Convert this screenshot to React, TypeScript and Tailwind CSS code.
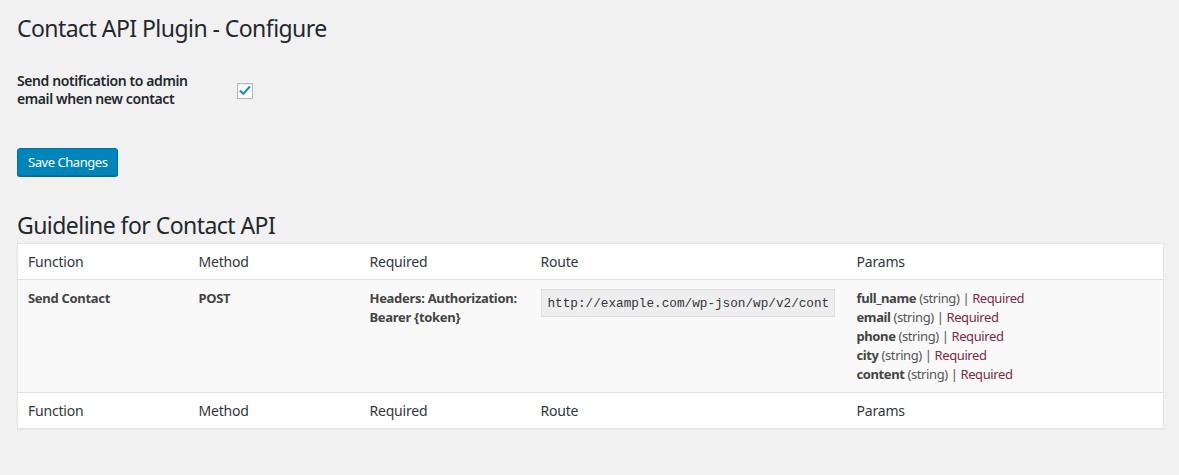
import React from 'react';

const font = { fontFamily: '"Noto Sans", "Open Sans", sans-serif' };

const params = ['full_name', 'email', 'phone', 'city', 'content'];

function HeadRow({ top }: { top?: boolean }) {
  const cls = `text-left font-normal text-[14px] leading-[19px] text-[#32373c] px-[10px] py-[8px] tracking-[-0.2px] ${
    top ? 'border-b border-[#e1e1e1]' : 'border-t border-[#e1e1e1]'
  }`;
  return (
    <tr>
      <th className={`${cls} w-[171px]`}>Function</th>
      <th className={`${cls} w-[171px]`}>Method</th>
      <th className={`${cls} w-[171px]`}>Required</th>
      <th className={`${cls} w-[316px]`}>Route</th>
      <th className={cls}>Params</th>
    </tr>
  );
}

export default function App() {
  return (
    <div className="min-h-[475px] bg-[#f1f1f1] text-[#23282d] pt-[13px] px-[17px] pr-[15px]" style={font}>
      <h1 className="text-[23px] leading-[30px] font-normal tracking-[-0.55px]">Contact API Plugin - Configure</h1>

      <div className="flex mt-[29px]">
        <div className="w-[220px] pr-[20px] text-[14px] leading-[18px] font-semibold tracking-[-0.4px] text-[#23282d]">
          Send notification to admin email when new contact
        </div>
        <div className="pt-[11px]">
          <div className="w-[16px] h-[16px] border border-[#b4b9be] bg-white shadow-[inset_0_1px_2px_rgba(0,0,0,0.1)] flex items-center justify-center">
            <svg viewBox="0 0 16 16" className="w-[14px] h-[14px]">
              <path d="M3 8.2 L6.2 11.2 L12.8 3.8" fill="none" stroke="#1e8cbe" strokeWidth="2.4" strokeLinecap="square" />
            </svg>
          </div>
        </div>
      </div>

      <button className="mt-[40px] h-[28px] px-[10px] pb-[1px] bg-[#0085ba] border border-[#0073aa] rounded-[3px] shadow-[0_1px_0_#006799] text-white text-[13px] leading-[26px] tracking-[-0.45px]">
        Save Changes
      </button>

      <h2 className="mt-[34px] text-[23px] leading-[30px] font-normal tracking-[-0.55px]">Guideline for Contact API</h2>

      <table className="mt-[3px] w-full table-fixed border-collapse border border-[#e5e5e5] bg-white shadow-[0_1px_1px_rgba(0,0,0,0.04)]">
        <thead>
          <HeadRow top />
        </thead>
        <tbody>
          <tr className="bg-[#f9f9f9] align-top text-[13px] leading-[19px] text-[#555]">
            <td className="px-[10px] pt-[9px] pb-[8px] font-bold text-[#444] tracking-[-0.3px]">Send Contact</td>
            <td className="px-[10px] pt-[9px] pb-[8px] font-bold text-[#444] tracking-[-0.3px]">POST</td>
            <td className="px-[10px] pt-[9px] pb-[8px] font-bold text-[#444] tracking-[-0.3px]">
              Headers: Authorization: Bearer {'{token}'}
            </td>
            <td className="px-[10px] pt-[9px] pb-[8px]">
              <input
                readOnly
                value="http://example.com/wp-json/wp/v2/contact"
                className="w-[294px] h-[28px] px-[6px] bg-[#eeeeee] border border-[#dddddd] text-[12.7px] text-[#32373c] outline-none"
                style={{ fontFamily: '"Liberation Mono", monospace' }}
              />
            </td>
            <td className="px-[10px] pt-[9px] pb-[8px] tracking-[-0.4px]">
              {params.map((p) => (
                <div key={p}>
                  <b className="text-[#444]">{p}</b> (string) | <span className="text-[#7f2a40]">Required</span>
                </div>
              ))}
            </td>
          </tr>
        </tbody>
        <tfoot>
          <HeadRow />
        </tfoot>
      </table>
    </div>
  );
}
